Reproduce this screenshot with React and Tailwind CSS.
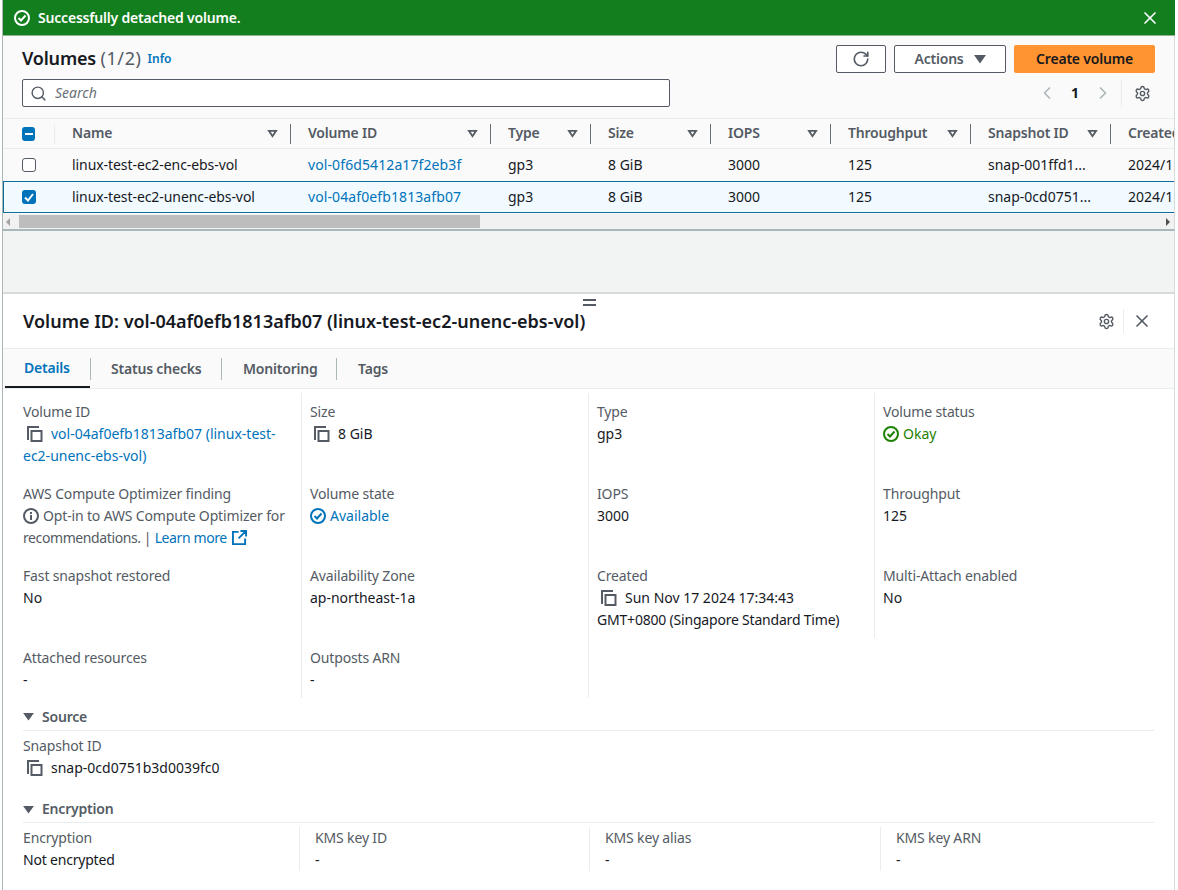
import { RotateCw, Settings, X, ChevronLeft, ChevronRight, Search } from 'lucide-react';

const CopyIcon = ({ className = '' }) => (
  <svg viewBox="0 0 16 16" className={`w-4 h-4 shrink-0 text-[#545b64] ${className}`} fill="none" stroke="currentColor" strokeWidth="2">
    <path d="M1 14V1h11" />
    <rect x="4.5" y="5" width="10" height="10" />
  </svg>
);

const CheckCircle = ({ className = '' }) => (
  <svg viewBox="0 0 16 16" className={`w-4 h-4 shrink-0 ${className}`} fill="none" stroke="currentColor" strokeWidth="2">
    <circle cx="8" cy="8" r="7" />
    <path d="M4.5 8l2.5 2.5 4.5-5" />
  </svg>
);

const SortCaret = () => (
  <svg viewBox="0 0 12 10" className="w-[11px] h-[9px] text-[#545b64]" fill="none" stroke="currentColor" strokeWidth="2">
    <path d="M2 2h8L6 8z" />
  </svg>
);

const SolidCaret = ({ className = '' }) => (
  <svg viewBox="0 0 12 10" className={`text-[#545b64] ${className}`} fill="currentColor">
    <path d="M0 1h12L6 9.5z" />
  </svg>
);

const columns = [
  { label: 'Name', w: 'w-[236px]' },
  { label: 'Volume ID', w: 'w-[200px]' },
  { label: 'Type', w: 'w-[100px]' },
  { label: 'Size', w: 'w-[120px]' },
  { label: 'IOPS', w: 'w-[120px]' },
  { label: 'Throughput', w: 'w-[140px]' },
  { label: 'Snapshot ID', w: 'w-[140px]' },
];

const rows = [
  ['linux-test-ec2-enc-ebs-vol', 'vol-0f6d5412a17f2eb3f', 'gp3', '8 GiB', '3000', '125', 'snap-001ffd1...', '2024/11/17'],
  ['linux-test-ec2-unenc-ebs-vol', 'vol-04af0efb1813afb07', 'gp3', '8 GiB', '3000', '125', 'snap-0cd0751...', '2024/11/17'],
];

const rowWidths = ['w-[236px]', 'w-[200px]', 'w-[100px]', 'w-[120px]', 'w-[120px]', 'w-[140px]', 'w-[140px]', 'w-[80px]'];

const Label = ({ children }) => <div className="text-[#545b64] tracking-[-0.15px]">{children}</div>;

const Cell = ({ label, children, first, className = '' }) => (
  <div className={`pr-[14px] ${first ? '' : 'border-l border-[#eaeded] pl-2'} ${className}`}>
    <Label>{label}</Label>
    {children}
  </div>
);

export default function App() {
  return (
    <div className="w-[1175px] h-[890px] overflow-hidden bg-white text-[14px] leading-[22px] text-[#16191f] font-['Noto_Sans',sans-serif] pl-[2px]">
      <div className="h-full border-l border-[#aab7b8] flex flex-col">
        {/* flash banner */}
        <div className="h-[36px] shrink-0 bg-[#137e1d] border-b border-[#8fb394] text-white flex items-center pl-[11px] pr-[15px]">
          <CheckCircle />
          <span className="ml-[8px] font-semibold tracking-[-0.2px]">Successfully detached volume.</span>
          <X className="ml-auto w-[20px] h-[20px]" strokeWidth={2} />
        </div>

        {/* volumes table */}
        <div className="h-[195px] shrink-0 bg-[#fafafa] border-b-2 border-r border-b-[#aab7b8] border-r-[#d5dbdb] flex flex-col">
          <div className="flex items-start pl-[19px] pr-[19px] pt-[9px] h-[43px]">
            <h1 className="text-[18px] leading-[26px] font-semibold tracking-[-0.2px]">
              Volumes <span className="font-normal text-[#545b64] tracking-[0.6px]">(1/2)</span>
            </h1>
            <a className="ml-[6px] mt-[5px] text-[12px] leading-[18px] font-semibold text-[#0073bb]">Info</a>
            <div className="ml-auto flex gap-2">
              <button className="w-[50px] h-[28px] border border-[#545b64] rounded-[2px] bg-white flex items-center justify-center text-[#545b64]">
                <RotateCw className="w-[18px] h-[18px]" strokeWidth={2.2} />
              </button>
              <button className="w-[112px] h-[28px] border border-[#545b64] rounded-[2px] bg-white flex items-center justify-center gap-[10px] font-semibold tracking-[-0.2px] text-[#545b64]">
                Actions
                <SolidCaret className="w-[12px] h-[10px]" />
              </button>
              <button className="w-[141px] h-[28px] rounded-[2px] bg-[#ff9431] font-semibold tracking-[-0.2px] text-[#16191f]">Create volume</button>
            </div>
          </div>
          <div className="flex items-center pl-[19px] pr-[23px] h-[28px]">
            <div className="w-[648px] h-[28px] border border-[#545b64] rounded-[2px] bg-white flex items-center pl-[7px]">
              <Search className="w-[17px] h-[17px] text-[#545b64]" strokeWidth={2} />
              <span className="ml-[8px] italic text-[#687078]">Search</span>
            </div>
            <div className="ml-auto flex items-center text-[#aab7b8]">
              <ChevronLeft className="w-[20px] h-[20px]" />
              <span className="mx-[14px] font-bold text-[#16191f]">1</span>
              <ChevronRight className="w-[20px] h-[20px]" />
              <div className="ml-[8px] pl-[12px] border-l border-[#eaeded] h-[28px] flex items-center text-[#545b64]">
                <Settings className="w-[17px] h-[17px]" strokeWidth={2} />
              </div>
            </div>
          </div>

          <div className="mt-[11px] h-[31px] border-t border-b border-[#eaeded] flex items-center overflow-hidden font-semibold tracking-[-0.2px] text-[#545b64]">
            <div className="w-[52px] shrink-0 pl-[19px] flex items-center h-full">
              <div className="w-[14px] h-[14px] rounded-[3px] bg-[#0073bb] flex items-center justify-center">
                <div className="w-[8px] h-[2px] bg-white" />
              </div>
              <div className="ml-[19px] h-[20px] border-l border-[#eaeded]" />
            </div>
            {columns.map((c) => (
              <div key={c.label} className={`${c.w} shrink-0 h-[20px] pl-[17px] pr-[12px] flex items-center justify-between border-r border-[#687078]`}>
                <span className="-mt-[2px]">{c.label}</span>
                <SortCaret />
              </div>
            ))}
            <div className="pl-[17px] -mt-[2px]">Created</div>
          </div>

          {rows.map((row, i) => (
            <div
              key={row[0]}
              className={`flex items-center shrink-0 overflow-hidden h-[32px] ${i === 1 ? 'bg-[#f1faff] border-y border-l border-[#0e6d9a]' : ''}`}
            >
              <div className={`shrink-0 ${i === 1 ? 'w-[51px] pl-[18px]' : 'w-[52px] pl-[19px]'}`}>
                {i === 1 ? (
                  <div className="w-[14px] h-[14px] rounded-[3px] bg-[#0073bb] flex items-center justify-center">
                    <svg viewBox="0 0 14 14" className="w-[14px] h-[14px]" fill="none" stroke="white" strokeWidth="2">
                      <path d="M3 7.5l3 3 5-6.5" />
                    </svg>
                  </div>
                ) : (
                  <div className="w-[14px] h-[14px] rounded-[3px] border border-[#545b64] bg-white" />
                )}
              </div>
              {row.map((v, j) => (
                <div
                  key={j}
                  className={`${rowWidths[j]} shrink-0 pl-[17px] whitespace-nowrap ${j === 0 ? 'tracking-[-0.07px]' : ''} ${j === 1 ? 'text-[#0073bb] tracking-[0.1px]' : ''}`}
                >
                  {v}
                </div>
              ))}
            </div>
          ))}

          {/* horizontal scrollbar */}
          <div className="flex-1 mt-[1px] bg-[#f1f1f1] flex items-center px-[3px]">
            <div className="w-0 h-0 border-y-[4px] border-y-transparent border-r-[4px] border-r-[#a3a3a3]" />
            <div className="ml-[9px] w-[461px] h-[13px] bg-[#bdbdbd]" />
            <div className="ml-auto mr-[1px] w-0 h-0 border-y-[4px] border-y-transparent border-l-[4px] border-l-[#505050]" />
          </div>
        </div>

        <div className="h-[61px] shrink-0 bg-[#f2f3f3] border-r border-[#d5dbdb]" />

        {/* split panel */}
        <div className="relative flex-1 border-t-2 border-r border-t-[#d5dbdb] border-r-[#d5dbdb] flex flex-col min-h-0">
          <div className="absolute left-[580px] top-[5px] w-[13px] h-[7px] border-y-2 border-[#545b64]" />
          <div className="h-[55px] shrink-0 flex items-center pl-[20px] pr-[22px] border-b border-[#eaeded]">
            <h2 className="text-[18px] leading-[28px] font-semibold -mt-[1px]">Volume ID: vol-04af0efb1813afb07 (linux-test-ec2-unenc-ebs-vol)</h2>
            <div className="ml-auto flex items-center">
              <Settings className="w-[17px] h-[17px] text-[#545b64]" strokeWidth={2} />
              <div className="ml-[8px] pl-[8px] border-l border-[#eaeded] h-[24px] flex items-center">
                <X className="w-[20px] h-[20px] text-[#545b64]" strokeWidth={2} />
              </div>
            </div>
          </div>

          <div className="h-[40px] shrink-0 bg-[#fafafa] border-b border-[#eaeded] flex items-center pl-[2px] font-semibold tracking-[-0.2px] text-[#545b64]">
            <div className="w-[85px] h-full flex items-center pl-[19px] text-[#0073bb] border-b-2 border-[#16191f]">Details</div>
            <div className="h-[22px] border-l border-[#aab7b8] pl-[20px] w-[131px]">Status checks</div>
            <div className="h-[22px] border-l border-[#aab7b8] pl-[21px] w-[115px]">Monitoring</div>
            <div className="h-[22px] border-l border-[#aab7b8] pl-[21px]">Tags</div>
          </div>

          <div className="pl-[20px] pr-[20px] pt-[4px]">
            <div className="grid grid-cols-[278px_287px_286px_1fr] grid-rows-[90px_82px_82px_51px]">
              <Cell first label="Volume ID" className="pt-[8px]">
                <div className="text-[#0073bb]">
                  <CopyIcon className="inline-block mr-[8px] ml-[4px] -mt-[3px]" />
                  vol-04af0efb1813afb07 (linux-test-ec2-unenc-ebs-vol)
                </div>
              </Cell>
              <Cell label="Size" className="pt-[8px]">
                <div className="flex items-center">
                  <CopyIcon className="mr-[8px] ml-[4px]" />8 GiB
                </div>
              </Cell>
              <Cell label="Type" className="pt-[8px]"><div>gp3</div></Cell>
              <Cell label="Volume status" className="pt-[8px]">
                <div className="flex items-center gap-[4px] text-[#1d8102]">
                  <CheckCircle />Okay
                </div>
              </Cell>

              <Cell first label="AWS Compute Optimizer finding">
                <div className="text-[#545b64] tracking-[-0.15px]">
                  <svg viewBox="0 0 16 16" className="inline-block w-4 h-4 -mt-[3px] mr-[4px]" fill="none" stroke="currentColor" strokeWidth="2">
                    <circle cx="8" cy="8" r="7" />
                    <path d="M8 7v5M8 4v2" />
                  </svg>
                  Opt-in to AWS Compute Optimizer for <span className="tracking-[-0.4px]">recommendations. |</span>{' '}
                  <span className="text-[#0073bb] tracking-[-0.4px]">Learn more</span>
                  <svg viewBox="0 0 16 16" className="inline-block w-[15px] h-[15px] -mt-[3px] ml-[5px] text-[#0073bb]" fill="none" stroke="currentColor" strokeWidth="2">
                    <path d="M7 2H1v13h13V9M9 1h6v6M15 1L7 9" />
                  </svg>
                </div>
              </Cell>
              <Cell label="Volume state">
                <div className="flex items-center gap-[4px] text-[#0073bb]">
                  <CheckCircle />Available
                </div>
              </Cell>
              <Cell label="IOPS"><div>3000</div></Cell>
              <Cell label="Throughput"><div>125</div></Cell>

              <Cell first label="Fast snapshot restored"><div>No</div></Cell>
              <Cell label="Availability Zone"><div>ap-northeast-1a</div></Cell>
              <Cell label="Created">
                <div>
                  <CopyIcon className="inline-block ml-[4px] mr-[8px] -mt-[3px]" />
                  Sun Nov 17 2024 17:34:43 <span className="tracking-[-0.2px]">GMT+0800 (Singapore Standard Time)</span>
                </div>
              </Cell>
              <Cell label="Multi-Attach enabled" className="mb-[9px]"><div>No</div></Cell>

              <Cell first label="Attached resources"><div>-</div></Cell>
              <Cell label="Outposts ARN"><div>-</div></Cell>
              <div className="border-l border-[#eaeded]" />
            </div>

            <div className="mt-[7px]">
              <div className="h-[25px] pb-[2px] flex items-center gap-[8px] font-semibold tracking-[-0.2px] text-[#545b64]">
                <SolidCaret className="w-[11px] h-[9px]" />
                Source
              </div>
              <div className="border-t border-[#eaeded] pt-[4px] h-[66px]">
                <Label>Snapshot ID</Label>
                <div className="flex items-center">
                  <CopyIcon className="ml-[4px] mr-[8px]" />snap-0cd0751b3d0039fc0
                </div>
              </div>
              <div className="h-[26px] flex items-center gap-[8px] font-semibold tracking-[-0.2px] text-[#545b64]">
                <SolidCaret className="w-[11px] h-[9px]" />
                Encryption
              </div>
              <div className="border-t border-[#eaeded] pt-[4px] grid grid-cols-[276px_290px_291px_1fr]">
                <div className="h-[44px]">
                  <Label>Encryption</Label>
                  <div className="tracking-[-0.2px]">Not encrypted</div>
                </div>
                <div className="h-[44px] border-l border-[#eaeded] pl-[15px]">
                  <Label>KMS key ID</Label>
                  <div>-</div>
                </div>
                <div className="h-[44px] border-l border-[#eaeded] pl-[15px]">
                  <Label>KMS key alias</Label>
                  <div>-</div>
                </div>
                <div className="h-[44px] border-l border-[#eaeded] pl-[15px]">
                  <Label>KMS key ARN</Label>
                  <div>-</div>
                </div>
              </div>
            </div>
          </div>
        </div>
      </div>
    </div>
  );
}
